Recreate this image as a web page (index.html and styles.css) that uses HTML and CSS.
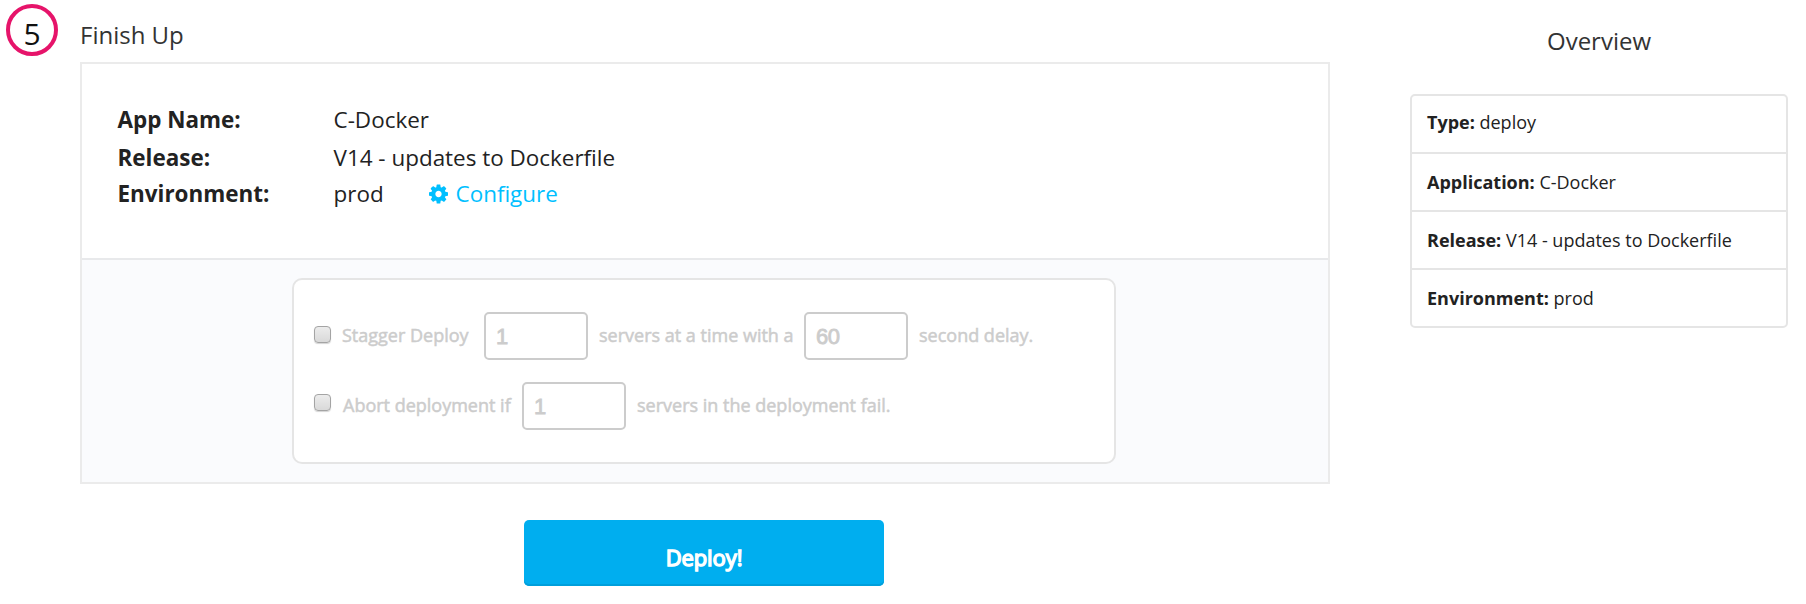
FILE: index.html
```html
<!DOCTYPE html>
<html lang="en">
<head>
<meta charset="utf-8">
<title>Deploy</title>
<link rel="stylesheet" href="styles.css">
</head>
<body>
<div class="page">
  <div class="step">5</div>
  <main class="main">
    <h1 class="title">Finish Up</h1>
    <section class="panel">
      <dl class="summary">
        <dt>App Name:</dt><dd>C-Docker</dd>
        <dt>Release:</dt><dd>V14 - updates to Dockerfile</dd>
        <dt>Environment:</dt>
        <dd class="env"><span>prod</span>
          <a class="configure"><svg class="gear" viewBox="128 128 1536 1536"><path d="M1152 896q0-106-75-181t-181-75-181 75-75 181 75 181 181 75 181-75 75-181zm512-109v222q0 12-8 23t-20 13l-185 28q-19 54-39 91 35 50 107 138 10 12 10 25t-9 23q-27 37-99 108t-94 71q-12 0-26-9l-138-108q-44 23-91 38-16 136-29 186-7 28-36 28h-222q-14 0-24.5-8.5t-11.5-21.5l-28-184q-49-16-90-37l-141 107q-10 9-25 9-14 0-25-11-126-114-165-168-7-10-7-23 0-12 8-23 15-21 51-66.5t54-70.5q-27-50-41-99l-183-27q-13-2-21-12.5t-8-23.5v-222q0-12 8-23t19-13l186-28q14-46 39-92-40-57-107-138-10-12-10-24 0-10 9-23 26-36 98.5-107.5t94.5-71.5q13 0 26 10l138 107q44-23 91-38 16-136 29-186 7-28 36-28h222q14 0 24.5 8.5t11.5 21.5l28 184q49 16 90 37l142-107q9-9 24-9 13 0 25 10 129 119 165 170 7 8 7 22 0 12-8 23-15 21-51 66.500t-54 70.500q26 50 41 98l183 28q13 2 21 12.500t8 23.500z"/></svg><span>Configure</span></a>
        </dd>
      </dl>
      <div class="options">
        <div class="options-box">
          <div class="row">
            <span class="check"></span><span class="label stagger">Stagger Deploy</span><span class="field">1</span><span class="label mid">servers at a time with a</span><span class="field">60</span><span class="label">second delay.</span>
          </div>
          <div class="row">
            <span class="check check-abort"></span><span class="label abort">Abort deployment if</span><span class="field">1</span><span class="label">servers in the deployment fail.</span>
          </div>
        </div>
      </div>
    </section>
    <button class="deploy">Deploy!</button>
  </main>
  <aside class="overview">
    <h2 class="overview-title">Overview</h2>
    <ul class="list">
      <li><b>Type:</b> deploy</li>
      <li><b>Application:</b> C-Docker</li>
      <li><b>Release:</b> V14 - updates to Dockerfile</li>
      <li><b>Environment:</b> prod</li>
    </ul>
  </aside>
</div>
</body>
</html>
```
FILE: styles.css
```css
* { box-sizing: border-box; margin: 0; padding: 0; }
body { background: #fff; color: #222; font-family: "Open Sans", "Noto Sans", sans-serif; }
.page { display: flex; align-items: flex-start; width: 1806px; height: 604px; overflow: hidden; }
.step {
  width: 52px; height: 52px; margin: 4px 22px 0 6px; padding-top: 7px;
  border: 4px solid #e6146a; border-radius: 50%;
  color: #111; font-size: 30px; line-height: 38px; text-align: center;
}
.main { width: 1250px; }
.title { height: 62px; padding-top: 15px; font-size: 24px; font-weight: 400; line-height: 40px; color: #333; }
.panel { height: 422px; border: 2px solid #ebebeb; }
.summary {
  display: grid; grid-template-columns: 216px 1fr; grid-template-rows: 38px 36px 37px;
  height: 194px; padding: 37px 0 0 35.5px; font-size: 22.45px; line-height: 38px;
}
.summary dt { font-weight: 700; }
.env { display: flex; }
.env > span { width: 95px; }
.configure { display: flex; align-items: center; gap: 8px; height: 38px; color: #00bfff; }
.gear { width: 19px; height: 20px; fill: #00bfff; }
.options { height: 224px; padding: 18px 0 0 210px; border-top: 2px solid #e8e9eb; background: #fafbfd; }
.options-box {
  display: flex; flex-direction: column; gap: 22px;
  width: 824px; height: 186px; padding: 32px 20px 0;
  border: 2px solid #e5e5e5; border-radius: 10px; background: #fff;
}
.row { display: flex; height: 48px; }
.check {
  width: 17px; height: 17px; margin-top: 14px; border: 1px solid #a4a4a4; border-radius: 4px;
  background: linear-gradient(#ececec, #d9d9d9); box-shadow: 0 1px 1px #d4d4d4;
}
.check-abort { margin-top: 12px; }
.label { margin-left: 11px; font-size: 18px; line-height: 46px; color: #ccc; white-space: nowrap; -webkit-text-stroke: .5px #ccc; }
.stagger { width: 142px; }
.abort { margin-left: 12px; width: 179px; }
.mid { width: 205px; }
.field {
  width: 104px; height: 48px; padding-left: 10px; border: 2px solid #ccc; border-radius: 5px;
  color: #ccc; font: 22px/45px "Liberation Sans", Arial, sans-serif; letter-spacing: -.5px; -webkit-text-stroke: .8px #ccc;
}
.deploy {
  display: block; width: 360px; height: 66px; margin: 36px 0 0 444px; padding-top: 8px;
  border: 0; border-radius: 5px; background: #00aeef; box-shadow: inset 0 -2px #009fdb;
  color: #fff; font: 400 22px/54px "Open Sans", "Noto Sans", sans-serif; letter-spacing: -.1px; -webkit-text-stroke: 1.4px #fff;
}
.overview { width: 378px; margin-left: 80px; }
.overview-title { height: 94px; padding-top: 21px; font-size: 24px; font-weight: 400; line-height: 40px; text-align: center; color: #333; }
.list { border: 2px solid #e5e5e5; border-radius: 5px; list-style: none; font-size: 18px; line-height: 50px; }
.list li { height: 58px; padding: 3px 0 0 15px; border-bottom: 2px solid #e5e5e5; }
.list li:first-child { padding-top: 1px; }
.list li:last-child { height: 56px; border-bottom: 0; }
```
